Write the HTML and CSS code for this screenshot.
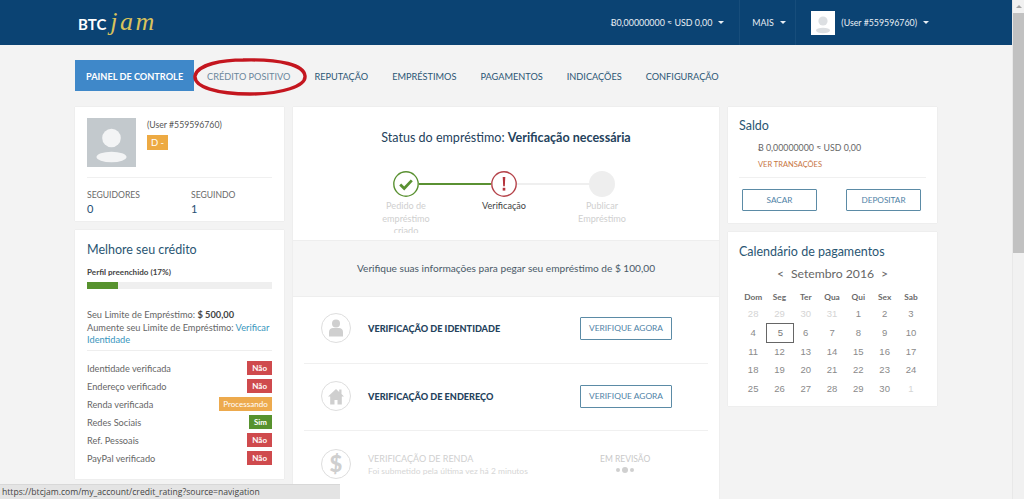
FILE: index.html
```html
<!DOCTYPE html>
<html lang="pt-BR">
<head>
<meta charset="utf-8">
<title>BTCjam</title>
<link rel="stylesheet" href="styles.css">
</head>
<body>
<div class="window">
  <div class="viewport">
    <header class="topbar">
      <div class="logo"><span class="logo-btc">BTC</span><span class="logo-jam">jam</span></div>
      <div class="top-right">
        <div class="top-item top-balance">Ƀ0,00000000 ≈ USD 0,00<i class="caret"></i></div>
        <div class="top-item top-more">MAIS<i class="caret"></i></div>
        <div class="top-item top-user">
          <span class="top-avatar">
            <svg viewBox="0 0 24 24" width="24" height="24"><rect width="24" height="24" fill="#fff"/><circle cx="12" cy="10" r="4.6" fill="#dcdfe2"/><ellipse cx="12" cy="19.5" rx="7" ry="2.7" fill="#dcdfe2"/></svg>
          </span>
          (User #559596760)<i class="caret"></i>
        </div>
      </div>
    </header>

    <nav class="tabs">
      <a class="tab tab-active">PAINEL DE CONTROLE</a>
      <a class="tab tab-muted">CRÉDITO POSITIVO</a>
      <a class="tab">REPUTAÇÃO</a>
      <a class="tab">EMPRÉSTIMOS</a>
      <a class="tab">PAGAMENTOS</a>
      <a class="tab">INDICAÇÕES</a>
      <a class="tab">CONFIGURAÇÃO</a>
    </nav>

    <main class="columns">
      <div class="col">
        <section class="card profile">
          <div class="profile-top">
            <svg class="profile-pic" viewBox="0 0 49 49" width="49" height="49"><rect width="49" height="49" fill="#c3c9cd"/><circle cx="24.5" cy="20" r="9.3" fill="#f3f4f5"/><ellipse cx="24.5" cy="39" rx="15" ry="5.2" fill="#f3f4f5"/></svg>
            <div>
              <div class="profile-name">(User #559596760)</div>
              <span class="grade">D -</span>
            </div>
          </div>
          <div class="follow">
            <div class="follow-col"><div class="follow-label">SEGUIDORES</div><div class="follow-num">0</div></div>
            <div class="follow-col"><div class="follow-label">SEGUINDO</div><div class="follow-num">1</div></div>
          </div>
        </section>

        <section class="card credit">
          <h2 class="card-title">Melhore seu crédito</h2>
          <div class="progress-label">Perfil preenchido (17%)</div>
          <div class="progress"><div class="progress-fill"></div></div>
          <p class="limit">Seu Limite de Empréstimo: <b>$ 500,00</b><br>Aumente seu Limite de Empréstimo: <a class="link">Verificar</a> <a class="link">Identidade</a></p>
          <ul class="checks">
            <li class="check"><span>Identidade verificada</span><span class="pill pill-red">Não</span></li>
            <li class="check"><span>Endereço verificado</span><span class="pill pill-red">Não</span></li>
            <li class="check"><span>Renda verificada</span><span class="pill pill-orange">Processando</span></li>
            <li class="check"><span>Redes Sociais</span><span class="pill pill-green">Sim</span></li>
            <li class="check"><span>Ref. Pessoais</span><span class="pill pill-red">Não</span></li>
            <li class="check"><span>PayPal verificado</span><span class="pill pill-red">Não</span></li>
          </ul>
        </section>
      </div>

      <section class="card center">
        <div class="status">
          <h1 class="status-title">Status do empréstimo: <b>Verificação necessária</b></h1>
          <div class="stepper">
            <svg class="step-icon" viewBox="0 0 26 26" width="26" height="26"><circle cx="13" cy="13" r="12.2" fill="#fff" stroke="#5a9132" stroke-width="1.4"/><path d="M7.2 13.4l4 4 7.6-8" fill="none" stroke="#5a9132" stroke-width="2.8"/></svg>
            <span class="step-line step-line-on"></span>
            <svg class="step-icon" viewBox="0 0 26 26" width="26" height="26"><circle cx="13" cy="13" r="12.2" fill="#fff" stroke="#b5434a" stroke-width="1.4"/><path d="M11.7 6h2.6l-.5 9.2h-1.6z" fill="#b5343c"/><rect x="11.7" y="16.8" width="2.6" height="2.8" fill="#b5343c"/></svg>
            <span class="step-line"></span>
            <span class="step-dot"></span>
          </div>
          <div class="step-labels">
            <div class="step-label">Pedido de empréstimo criado</div>
            <div class="step-label step-label-on">Verificação</div>
            <div class="step-label">Publicar Empréstimo</div>
          </div>
        </div>
        <div class="notice">Verifique suas informações para pegar seu empréstimo de $ 100,00</div>
        <div class="verify verify-first">
          <span class="v-icon">
            <svg viewBox="0 0 16 18" width="16" height="18"><circle cx="8" cy="4.6" r="4" fill="#cfcfcf"/><path d="M1 17.5v-4.5c0-2.4 2-4 4-4h6c2 0 4 1.600 4 4v4.500z" fill="#cfcfcf"/></svg>
          </span>
          <div class="v-title">VERIFICAÇÃO DE IDENTIDADE</div>
          <a class="btn btn-verify">VERIFIQUE AGORA</a>
        </div>
        <div class="verify">
          <span class="v-icon">
            <svg viewBox="0 0 18 17" width="18" height="17"><path d="M9 1L1 8.500h2.200V16.500h4.300v-4.500h3v4.500h4.300V8.500H17l-2.500-2.400V1.500h-2.300v2.400z" fill="#cfcfcf"/></svg>
          </span>
          <div class="v-title">VERIFICAÇÃO DE ENDEREÇO</div>
          <a class="btn btn-verify">VERIFIQUE AGORA</a>
        </div>
        <div class="verify verify-off">
          <span class="v-icon v-dollar">$</span>
          <div class="v-text">
            <div class="v-title-off">VERIFICAÇÃO DE RENDA</div>
            <div class="v-sub">Foi submetido pela última vez há 2 minutos</div>
          </div>
          <div class="review">
            <div>EM REVISÃO</div>
            <div class="dots"><i></i><i class="dot-big"></i><i></i></div>
          </div>
        </div>
      </section>

      <div class="col">
        <section class="card saldo">
          <h2 class="card-title">Saldo</h2>
          <div class="saldo-value">Ƀ 0,00000000 ≈ USD 0,00</div>
          <a class="saldo-link">VER TRANSAÇÕES</a>
          <div class="saldo-actions">
            <a class="btn btn-saldo">SACAR</a>
            <a class="btn btn-saldo">DEPOSITAR</a>
          </div>
        </section>

        <section class="card calendar">
          <h2 class="card-title">Calendário de pagamentos</h2>
          <div class="month"><span>&lt;</span><span>Setembro 2016</span><span>&gt;</span></div>
          <div class="cal-grid">
            <div class="dow">Dom</div><div class="dow">Seg</div><div class="dow">Ter</div><div class="dow">Qua</div><div class="dow">Qui</div><div class="dow">Sex</div><div class="dow">Sab</div>
            <div class="day day-off">28</div><div class="day day-off">29</div><div class="day day-off">30</div><div class="day day-off">31</div><div class="day">1</div><div class="day">2</div><div class="day">3</div>
            <div class="day">4</div><div class="day day-today">5</div><div class="day">6</div><div class="day">7</div><div class="day">8</div><div class="day">9</div><div class="day">10</div>
            <div class="day">11</div><div class="day">12</div><div class="day">13</div><div class="day">14</div><div class="day">15</div><div class="day">16</div><div class="day">17</div>
            <div class="day">18</div><div class="day">19</div><div class="day">20</div><div class="day">21</div><div class="day">22</div><div class="day">23</div><div class="day">24</div>
            <div class="day">25</div><div class="day">26</div><div class="day">27</div><div class="day">28</div><div class="day">29</div><div class="day">30</div><div class="day day-off">1</div>
          </div>
        </section>
      </div>
    </main>

    <svg class="annotation" viewBox="0 0 114 38" width="114" height="38"><path d="M58 2C28 1 4 7 2 18c-1 11 22 18 55 18 32 0 56-8 55-18C111 7 88 1 50 2" fill="none" stroke="#c4161f" stroke-width="3.4"/></svg>
    <div class="statusbar">https://btcjam.com/my_account/credit_rating?source=navigation</div>
  </div>
  <div class="scrollbar">
    <div class="scroll-arrow"></div>
    <div class="scroll-thumb"></div>
  </div>
</div>
</body>
</html>
```
FILE: styles.css
```css
* { box-sizing: border-box; }
html, body { margin: 0; padding: 0; height: 100%; overflow: hidden; }
body { font-family: Lato, "Open Sans", sans-serif; color: #555; font-size: 10.5px; }
h1, h2, p, ul { margin: 0; padding: 0; font-weight: 400; }
a { text-decoration: none; }

.window { display: flex; width: 1024px; height: 499px; overflow: hidden; }
.viewport { position: relative; width: 1012px; height: 499px; overflow: hidden; background: #f3f3f3; }

.scrollbar { width: 12px; background: #f1f1f1; border-left: 1px solid #e8e8e8; }
.scroll-arrow { height: 13px; position: relative; }
.scroll-arrow::after { content: ""; position: absolute; left: 3px; top: 5px; border: 3px solid transparent; border-top: 0; border-bottom: 3px solid #a3a3a3; }
.scroll-thumb { height: 240px; background: #c1c1c1; }

.topbar { height: 45px; background: #0b4373; display: flex; justify-content: space-between; padding-left: 78px; color: #e8eef4; }
.logo { display: flex; align-items: baseline; padding-top: 9px; line-height: 26px; }
.logo-btc { font-size: 15px; font-weight: 700; color: #fff; }
.logo-jam { font-family: "Liberation Serif", serif; font-style: italic; font-size: 26px; color: #d9c25c; letter-spacing: 2.500px; margin-left: 4px; }
.top-right { display: flex; height: 45px; }
.top-item { display: flex; align-items: center; font-size: 8.900px; padding-bottom: 1px; }
.top-balance { padding-right: 15px; border-right: 1px solid #174d7b; }
.top-more { padding: 0 12px; border-right: 1px solid #174d7b; width: 56px; }
.top-user { padding: 0 83px 0 15px; font-size: 8.800px; }
.top-avatar { width: 24px; height: 24px; margin-right: 6px; display: block; }
.top-avatar svg { display: block; }
.caret { display: inline-block; margin-left: 6px; border: 3px solid transparent; border-bottom: 0; border-top: 3px solid #e8eef4; }

.tabs { display: flex; margin: 15px 0 16px 75px; height: 31px; }
.tab { display: flex; align-items: center; padding: 2px 12px 0; font-size: 9.200px; color: #2b5675; white-space: nowrap; }
.tab-active { width: 119px; padding: 2px 11px 0; margin-right: 1px; background: #3f88c9; color: #fff; font-weight: 700; font-size: 9.200px; }
.tab-muted { color: #6b879c; }

.columns { display: grid; grid-template-columns: 209px 426px 209px; gap: 9px; padding-left: 75px; align-items: start; }
.col { display: flex; flex-direction: column; gap: 9px; }
.card { background: #fff; box-shadow: 0 0 1px rgba(0,0,0,.12); }
.card-title { font-size: 12.500px; color: #2a5673; line-height: 18px; }

.profile { height: 114px; padding: 11px 12px; }
.profile-top { display: flex; gap: 11px; height: 60px; border-bottom: 1px solid #f0f0f0; }
.profile-pic { display: block; }
.profile-name { font-size: 8.700px; line-height: 14px; margin-bottom: 3px; color: #555; }
.grade { display: block; width: 21px; height: 15px; background: #edaa43; color: #fff; font-size: 9.500px; line-height: 15px; text-align: center; }
.follow { display: flex; padding-top: 11px; }
.follow-col { flex: none; width: 104px; }
.follow-label { font-size: 8.600px; line-height: 13px; color: #6a6a6a; }
.follow-num { font-size: 11px; line-height: 13px; color: #1f4f74; }

.credit { height: 249px; padding: 11px 12px 0; }
.progress-label { margin-top: 7px; font-size: 8.100px; font-weight: 700; line-height: 12px; color: #444; }
.progress { height: 7px; margin-top: 4px; background: #efefef; }
.progress-fill { width: 17%; height: 100%; background: #57922e; }
.limit { margin-top: 20px; padding-bottom: 3px; font-size: 9.250px; line-height: 12.700px; color: #666; border-bottom: 1px solid #eee; }
.limit b { color: #444; }
.link { color: #3a96bd; }
.checks { list-style: none; margin-top: 8px; }
.check { display: flex; justify-content: space-between; align-items: center; height: 18px; font-size: 9.200px; color: #666; }
.pill { height: 14px; line-height: 14px; padding: 0 5px; font-size: 8px; font-weight: 700; color: #fff; }
.pill-red { background: #cf4a4d; }
.pill-orange { background: #edaa4d; font-weight: 400; width: 53px; padding: 0; text-align: center; }
.pill-green { background: #57922e; }

.center { height: 392px; }
.status { height: 134px; overflow: hidden; padding-top: 22px; border-bottom: 1px solid #eee; }
.status-title { font-size: 12.550px; line-height: 17px; text-align: center; color: #24425c; }
.status-title b { font-weight: 700; }
.stepper { display: flex; align-items: center; justify-content: center; margin-top: 25px; padding-right: 4px; }
.step-icon { display: block; }
.step-line { width: 72px; height: 2px; background: #efefef; }
.step-line-on { background: #5a9132; }
.step-dot { width: 26px; height: 26px; border-radius: 50%; background: #eeeeee; }
.step-labels { display: grid; grid-template-columns: repeat(3, 98px); justify-content: center; height: 33px; overflow: hidden; margin-top: 3px; padding-right: 4px; }
.step-label { width: 72px; justify-self: center; text-align: center; font-size: 9.100px; line-height: 12.500px; color: #cfcfcf; }
.step-label-on { color: #3f3f3f; }

.notice { height: 56px; background: #f6f6f6; border-bottom: 1px solid #eee; display: flex; align-items: center; justify-content: center; padding-bottom: 1px; font-size: 10.150px; color: #4a5a68; }

.verify { display: flex; align-items: center; height: 67px; margin: 0 11px; padding: 0 0 2px 17px; border-bottom: 1px solid #f0f0f0; }
.verify-first { padding-bottom: 4px; }
.v-icon { display: flex; align-items: center; justify-content: center; width: 30px; height: 30px; margin-right: 17px; border: 1px solid #dedede; border-radius: 50%; flex: none; }
.v-title { width: 212px; font-size: 9.150px; font-weight: 900; color: #24425c; }
.btn { display: flex; align-items: center; justify-content: center; border: 1px solid #5b8ba6; border-radius: 1px; color: #4f82a6; }
.btn-verify { width: 92px; height: 23px; font-size: 8.400px; }

.verify-off { border-bottom: 0; }
.v-dollar { font-size: 22px; font-weight: 900; color: #cfcfcf; }
.v-text { width: 232px; padding-top: 2px; }
.v-title-off { font-size: 9px; line-height: 12px; color: #d0d0d0; }
.v-sub { font-size: 8.450px; line-height: 12px; color: #d6d6d6; }
.review { width: 50px; font-size: 8.500px; text-align: center; color: #c9c9c9; white-space: nowrap; }
.dots { display: flex; justify-content: center; align-items: center; gap: 2px; margin-top: 3px; }
.dots i { width: 4px; height: 4px; border-radius: 50%; background: #d0d0d0; }
.dots .dot-big { width: 6px; height: 6px; }

.saldo { height: 116px; padding: 10px 11px 0; }
.saldo-value { margin: 6px 0 0 19px; font-size: 8.800px; line-height: 14px; color: #666; }
.saldo-link { display: block; margin: 4px 0 0 19px; font-size: 7.500px; line-height: 12px; color: #c8753f; }
.saldo-actions { display: flex; justify-content: space-between; margin-top: 6px; padding: 11px 5px 0 3px; border-top: 1px solid #f0f0f0; }
.btn-saldo { width: 75px; height: 22px; font-size: 8.200px; }

.calendar { height: 174px; padding: 11px 11px 0 11px; }
.month { display: flex; justify-content: center; gap: 7px; margin-top: 4px; font-size: 12.200px; line-height: 18px; color: #666; }
.cal-grid { display: grid; grid-template-columns: repeat(7, 26.300px); margin: 7px 0 0 1px; text-align: center; }
.dow { height: 15px; line-height: 15px; font-size: 8.300px; font-weight: 700; color: #6a6a6a; }
.day { height: 18.600px; line-height: 18.600px; font-family: "Liberation Sans", Arial, sans-serif; font-size: 9.500px; color: #8a8a8a; }
.day-off { color: #d4d4d4; }
.day-today { border: 1.500px solid #666; width: 28px; height: 20px; line-height: 17px; margin-top: -1px; color: #777; }

.annotation { position: absolute; left: 193px; top: 58px; }
.statusbar { position: absolute; left: 0; bottom: 0; width: 340px; height: 15px; padding-left: 2px; background: #e4e4e4; border-top: 1px solid #d8d8d8; font-family: "Open Sans", sans-serif; font-size: 8.600px; line-height: 14px; color: #444; white-space: nowrap; }
```
